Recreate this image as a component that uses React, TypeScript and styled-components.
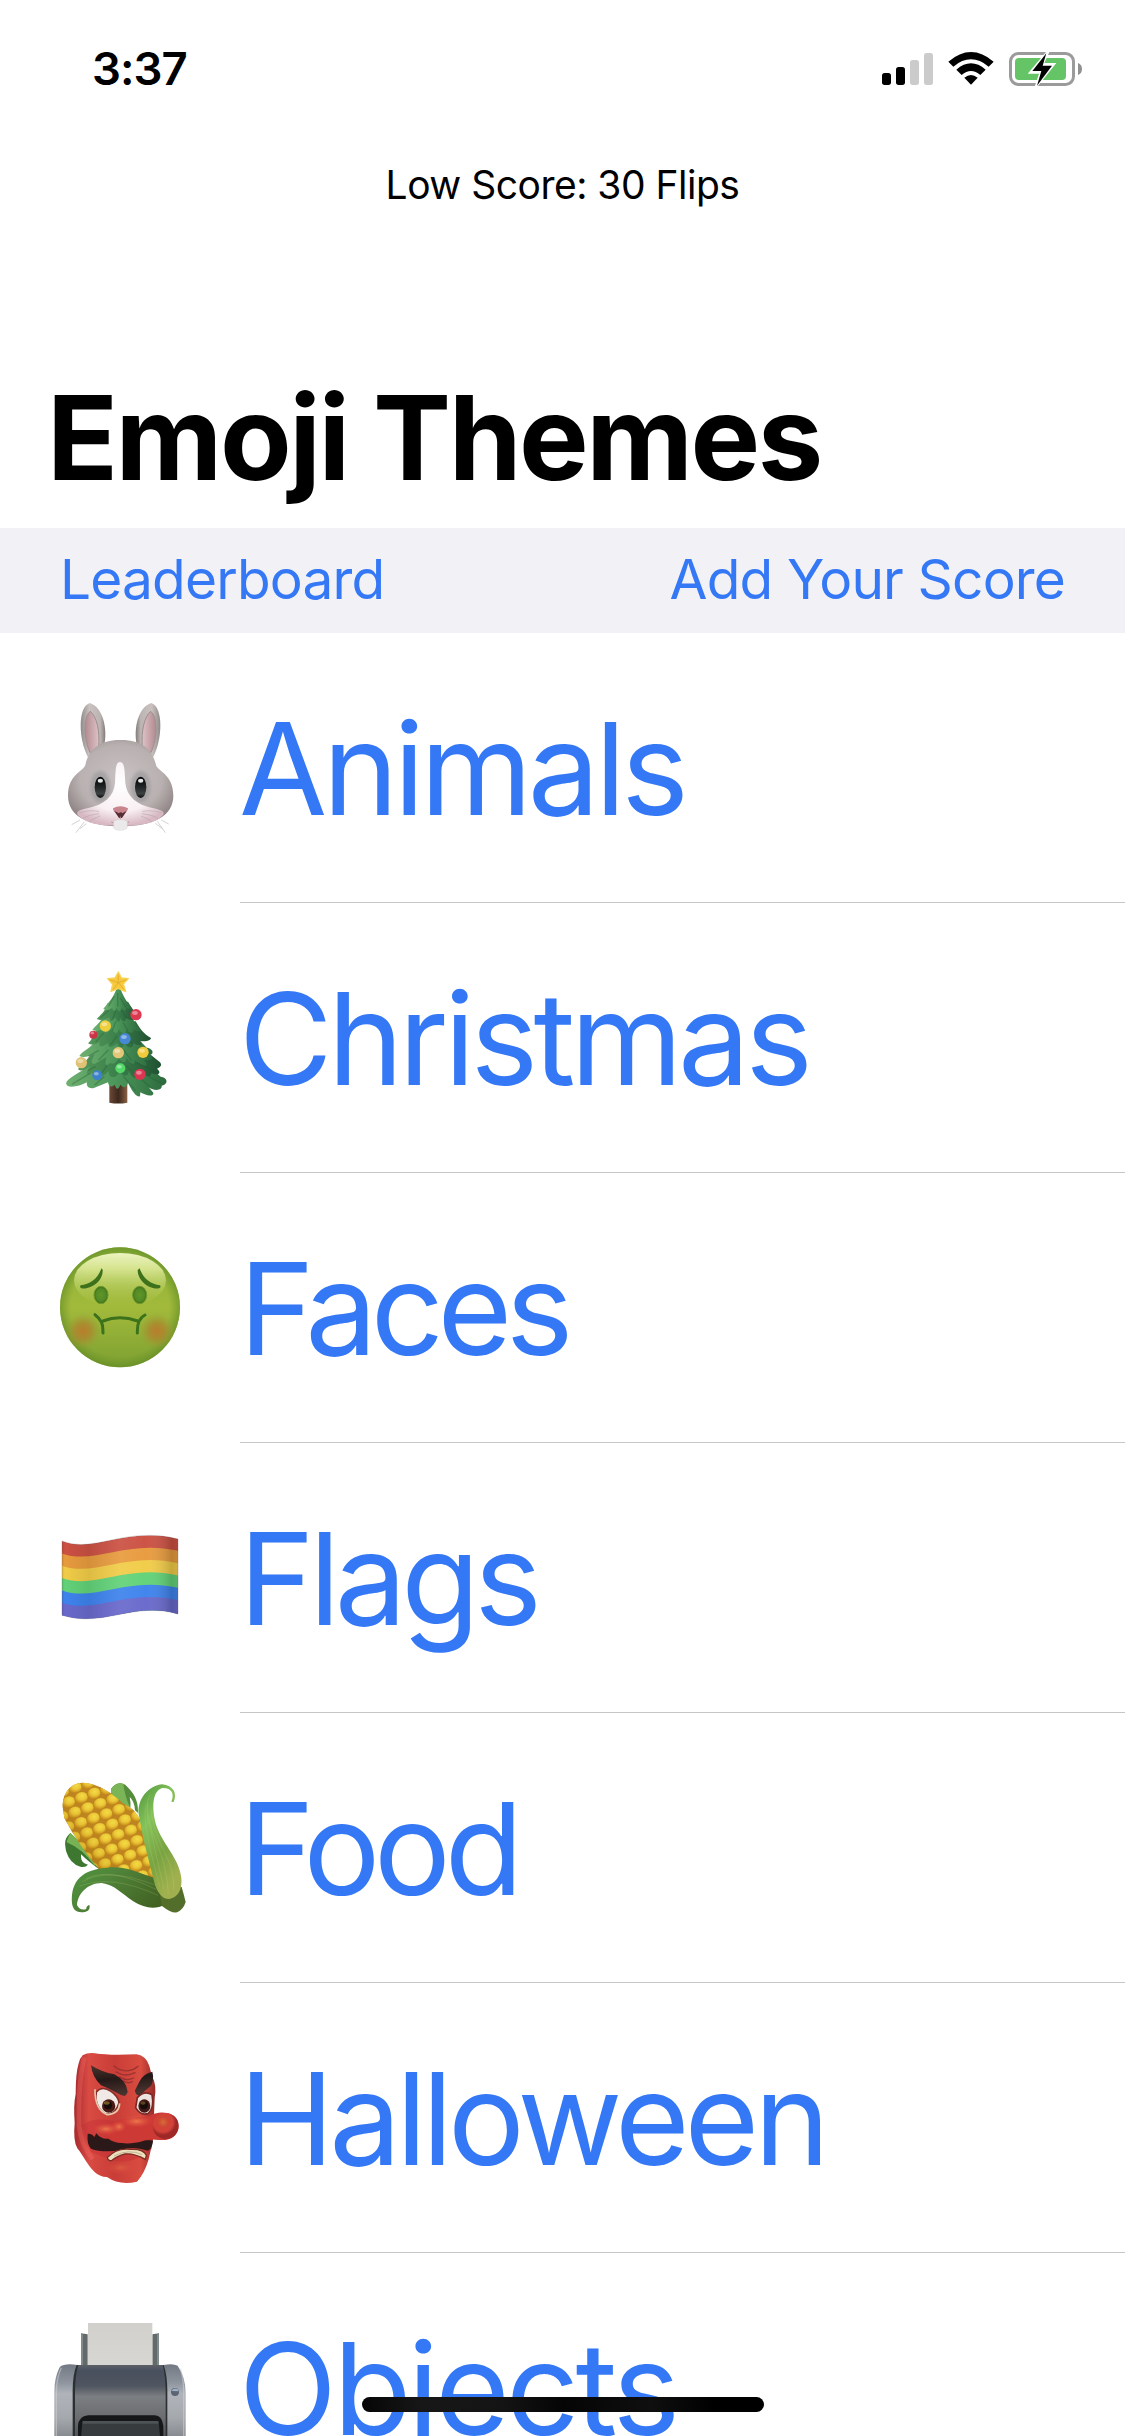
import React from "react";
import styled, { createGlobalStyle } from "styled-components";

const Global = createGlobalStyle`
  * { box-sizing: border-box; }
  body { margin: 0; background: #fff; font-family: Inter, Roboto, "Liberation Sans", sans-serif; }
`;

const Screen = styled.main`
  position: relative;
  width: 1125px;
  height: 2436px;
  overflow: hidden;
  display: flex;
  flex-direction: column;
  background: #fff;
  color: #000;
`;

const StatusBar = styled.header`
  flex: none;
  height: 132px;
  padding: 30px 15px 0 92px;
  display: flex;
  justify-content: space-between;
  align-items: flex-start;
`;

const Clock = styled.time`
  font-size: 45.5px;
  font-weight: 600;
  line-height: 78px;
  letter-spacing: -1px;
`;

const StatusIcons = styled.svg`
  display: block;
  width: 250px;
  height: 80px;
`;

const ScoreLine = styled.p`
  flex: none;
  margin: 0;
  height: 228px;
  padding-top: 29px;
  text-align: center;
  font-size: 39px;
  line-height: 48px;
  letter-spacing: -0.5px;
`;

const Title = styled.h1`
  flex: none;
  margin: 0;
  height: 168px;
  padding-left: 47px;
  font-size: 117px;
  font-weight: 700;
  line-height: 155px;
  letter-spacing: -2.45px;
  white-space: nowrap;
`;

const ActionBar = styled.nav`
  flex: none;
  height: 105px;
  padding: 0 60px 3px;
  display: flex;
  justify-content: space-between;
  align-items: center;
  background: #f2f1f6;
`;

const Action = styled.a`
  color: #3478f6;
  font-size: 55px;
  line-height: 66px;
  letter-spacing: -0.83px;
  white-space: nowrap;
`;

const ThemeList = styled.ul`
  flex: none;
  margin: 0;
  padding: 0;
  list-style: none;
`;

const ThemeRow = styled.li`
  height: 270px;
  padding-left: 40px;
  display: flex;
`;

const Emoji = styled.svg`
  flex: none;
  width: 160px;
  height: 170px;
  margin: 47px 40px 0 0;
`;

const LabelCell = styled.div`
  flex: 1;
  display: flex;
  align-items: center;
  padding-top: 2px;
  border-bottom: 1px solid #c6c6c8;
`;

const Label = styled.span<{ $track: number; $inset: number }>`
  color: #3478f6;
  font-size: 128px;
  line-height: 156px;
  letter-spacing: ${(p) => p.$track}px;
  margin-left: ${(p) => p.$inset}px;
  white-space: nowrap;
`;

const HomeIndicator = styled.div`
  position: absolute;
  left: 362px;
  top: 2397px;
  width: 402px;
  height: 15px;
  border-radius: 8px;
  background: linear-gradient(90deg, #060606, #171717 15%, #141414 35%, #050505 50%, #0f0f0f 72%, #000 88%);
`;

function Status() {
  return (
    <StatusIcons viewBox="0 0 750 240" aria-label="Signal, Wi-Fi, charging">
      <rect x="66" y="129" width="27" height="36" rx="8" />
      <rect x="108" y="111" width="27" height="54" rx="8" />
      <rect x="150" y="90" width="27" height="75" rx="8" fill="#cbcbcb" />
      <rect x="192" y="69" width="27" height="96" rx="8" fill="#cbcbcb" />
      <path d="M265 95Q333 37 401 95L386 110Q333 66 280 110Z" />
      <path d="M289 119Q333 81 377 119L361 135Q333 111 305 135Z" />
      <path d="M313 143Q333 127 353 143L333 164Z" />
      <rect x="451.500" y="70.500" width="189" height="93" rx="24" fill="none" stroke="#9b9b9b" strokeWidth="9" />
      <path d="M654 99Q666 104 666 117T654 135Z" fill="#909090" />
      <rect x="465" y="84" width="153" height="66" rx="12" fill="#65c466" />
      <path d="M560 64L503 131H537L524 170H532L589 99H553L569 64Z" fill="#fff" />
      <path d="M559 70L517 123H544L531 167L576 107H548Z" />
    </StatusIcons>
  );
}

function Rabbit() {
  return (
    <Emoji viewBox="0 0 480 510" role="img" aria-label="Rabbit">
      <defs>
        <radialGradient id="fur" cx=".5" cy=".45" r=".6">
          <stop offset="0" stopColor="#c9c2c2" /><stop offset=".65" stopColor="#b9b1b1" /><stop offset="1" stopColor="#8d8182" />
        </radialGradient>
        <linearGradient id="ear"><stop stopColor="#8f8988" /><stop offset=".35" stopColor="#c9c2c0" /><stop offset=".8" stopColor="#bcb4b2" /><stop offset="1" stopColor="#817b7a" /></linearGradient>
        <linearGradient id="pink" x2="1"><stop stopColor="#b28a90" /><stop offset="1" stopColor="#dfc3c7" /></linearGradient>
        <radialGradient id="muzzle" cx=".5" cy=".35" r=".65"><stop stopColor="#fff" /><stop offset=".65" stopColor="#f9f0f4" /><stop offset="1" stopColor="#d8b8c2" /></radialGradient>
        <linearGradient id="eye" x2="0" y2="1"><stop stopColor="#000" /><stop offset=".55" stopColor="#262a2a" /><stop offset=".8" stopColor="#3c4141" /><stop offset="1" stopColor="#080808" /></linearGradient>
        <filter id="softFur"><feGaussianBlur stdDeviation="4" /></filter>
      </defs>
      <path d="M143 230C116 178 112 82 149 69C188 80 203 145 193 193Z" fill="url(#ear)" />
      <path d="M150 218C130 174 130 110 151 94C170 111 180 151 176 203Z" fill="url(#pink)" stroke="#9b9091" strokeWidth="3" />
      <g transform="translate(483 0) scale(-1 1)">
        <path d="M143 230C116 178 112 82 149 69C188 80 203 145 193 193Z" fill="url(#ear)" />
        <path d="M150 218C130 174 130 110 151 94C170 111 180 151 176 203Z" fill="url(#pink)" stroke="#9b9091" strokeWidth="3" />
      </g>
      <path d="M242 180C303 179 338 207 348 255C354 275 400 283 400 347C400 407 342 438 242 439C142 438 84 407 84 347C84 283 130 275 136 255C146 207 181 179 242 180Z" fill="url(#fur)" />
      <ellipse cx="181" cy="320" rx="30" ry="47" fill="#88898d" opacity=".45" filter="url(#softFur)" />
      <ellipse cx="302" cy="320" rx="30" ry="47" fill="#88898d" opacity=".45" filter="url(#softFur)" />
      <path d="M240 246C226 246 227 270 225 309C222 350 191 375 145 384C105 392 103 400 128 417C154 435 195 437 241 437C288 437 331 433 357 416C378 400 379 393 337 384C291 375 260 350 256 309C254 270 254 246 240 246Z" fill="url(#muzzle)" />
      {[181, 302].map((x) => (
        <g key={x}><ellipse cx={x} cy="322" rx="17" ry="32" fill="url(#eye)" /><ellipse cx={x} cy="302" rx="8" ry="6" fill="#e5e9e9" /></g>
      ))}
      <path d="M219 385Q241 373 264 385C264 393 255 399 246 411H237C228 399 219 395 219 385Z" fill="#c9858e" />
      <path d="M223 393L237 400Q242 394 247 400L260 393L246 414H237Z" fill="#552d32" />
      <path d="M241 410L241 421Q224 432 214 426M241 421Q257 432 268 426" fill="none" stroke="#b995a0" strokeWidth="3" />
      <path d="M221 424Q241 413 262 424L261 445Q251 453 241 451Q230 453 221 445Z" fill="#ece9ea" stroke="#d5cccf" />
      <g fill="none" stroke="#a9a2a4" strokeWidth="2" opacity=".75">
        <path d="M177 394Q142 389 117 399M177 401Q145 405 129 415M180 408Q155 417 147 426M306 394Q341 389 366 399M306 401Q338 405 354 415M303 408Q328 417 336 426" />
        <path d="M120 420L95 434M133 425L108 458M139 431L120 446M364 420L386 432M352 424L376 458M346 430L367 446" />
      </g>
    </Emoji>
  );
}

const BAUBLES: [number, number, number, string][] = [
  [160, 254, 12, "#cc3347"], [288, 194, 17, "#dc3850"], [196, 228, 17, "#efcf3c"], [255, 266, 17, "#4788d5"],
  [235, 308, 17, "#e4c879"], [309, 307, 17, "#f1cb3c"], [124, 338, 17, "#dfc273"], [241, 355, 15, "#54d969"],
  [172, 376, 15, "#3d80cc"], [300, 373, 17, "#dc3552"],
];

function Tree() {
  return (
    <Emoji viewBox="0 0 480 510" role="img" aria-label="Christmas tree">
      <defs>
        <linearGradient id="trunk"><stop stopColor="#6b4936" /><stop offset=".5" stopColor="#3d281d" /><stop offset="1" stopColor="#8a6245" /></linearGradient>
        <linearGradient id="pine"><stop stopColor="#6fb070" /><stop offset=".5" stopColor="#4c965a" /><stop offset="1" stopColor="#2c6a3d" /></linearGradient>
        <linearGradient id="pineDark"><stop stopColor="#55985a" /><stop offset=".5" stopColor="#397d4a" /><stop offset="1" stopColor="#205132" /></linearGradient>
      </defs>
      <path d="M208 395H262V458Q235 463 208 458Z" fill="url(#trunk)" />
      <path d="M151 345C116 371 75 387 79 403C82 416 118 410 141 397C137 410 151 421 169 411L204 397C206 412 216 412 224 404Q232 428 241 404Q255 421 264 399C278 426 288 441 300 439L301 427C320 439 342 440 340 428L326 412C349 427 368 417 365 407C387 402 383 382 362 380L326 349Z" fill="url(#pine)" />
      <path d="M163 295C149 326 122 347 114 357C126 369 137 355 151 350C128 373 144 380 168 362C157 389 188 386 206 362C207 391 231 384 239 363C251 387 266 377 267 362C277 394 302 386 299 366C319 386 337 378 334 369C352 378 368 370 351 356Q370 348 360 337L306 293Z" fill="url(#pineDark)" />
      <path d="M167 270C151 298 127 302 118 318C130 325 148 318 165 312C154 331 150 343 165 341L200 321C192 344 199 352 210 338C222 346 229 337 237 325C248 344 259 338 260 324C273 345 287 348 283 331L312 348C323 350 321 337 311 329C331 334 346 326 330 315C346 310 335 293 320 293L295 267Z" fill="url(#pine)" />
      <path d="M178 229C158 258 158 267 144 280C158 289 171 280 180 276C172 292 186 294 204 278C204 300 221 289 231 279C239 297 252 295 252 280C268 300 283 293 279 280C300 290 313 287 299 273C325 276 336 267 332 263C311 253 297 232 287 214Z" fill="url(#pineDark)" />
      <path d="M191 191C183 220 168 225 157 239C174 247 184 240 192 235C194 256 208 246 216 235C222 254 234 252 236 238C249 257 261 251 258 237C271 253 284 250 280 238C299 249 310 244 300 236C289 224 276 210 272 184Z" fill="url(#pine)" />
      <path d="M203 159C199 181 183 193 170 207C186 214 198 207 208 202C208 217 219 216 225 202C232 219 240 220 240 204C249 220 260 215 257 203C276 216 289 209 277 198L295 199C281 184 271 166 264 155Z" fill="url(#pineDark)" />
      <path d="M233 105C222 145 203 160 190 176C202 185 211 177 217 173C217 187 227 183 230 173C237 188 242 187 244 174C254 186 261 182 258 172C270 182 280 178 272 170C259 154 248 137 240 112Z" fill="url(#pine)" />
      <g fill="none" stroke="#215c32" strokeWidth="4" opacity=".38" strokeLinecap="round">
        <path d="M222 140L207 167M233 130V168M242 145L256 170M205 182L182 203M227 184L219 206M245 182L260 205M203 212L184 232M227 215L218 239M250 219L263 240M190 250L168 275M230 259L212 283M252 255L276 279M175 302L146 318M204 301L177 329M251 300L274 331M295 300L319 319M166 350L145 361M201 347L185 370M260 348L278 368M294 340L336 359M149 371L97 402M192 380L165 404M251 380L286 421M304 388L332 413M326 379L365 401" />
      </g>
      <path d="M235 66L244 84L265 86L250 102L257 125L235 115L213 124L218 103L203 86L225 84Z" fill="#f6c83b" stroke="#f8d253" strokeWidth="4" strokeLinejoin="round" />
      <path d="M235 73V98L208 89M235 98L219 120M235 98L253 119M235 98L260 89" fill="none" stroke="#dca42b" strokeWidth="2" />
      {BAUBLES.map(([x, y, r, c]) => (
        <g key={`${x}-${y}`}><circle cx={x} cy={y} r={r} fill={c} /><ellipse cx={x - 3} cy={y - 5} rx={r * 0.5} ry={r * 0.35} fill="#fff" opacity=".4" /></g>
      ))}
    </Emoji>
  );
}

function SickFace() {
  return (
    <Emoji viewBox="0 -30 480 510" role="img" aria-label="Nauseated face">
      <defs>
        <linearGradient id="green" x2="0" y2="1"><stop stopColor="#8ab038" /><stop offset=".5" stopColor="#a2ba3b" /><stop offset="1" stopColor="#7da031" /></linearGradient>
        <radialGradient id="rim"><stop offset=".82" stopColor="#658e25" stopOpacity="0" /><stop offset="1" stopColor="#5e8924" stopOpacity=".6" /></radialGradient>
        <linearGradient id="shine" x2="0" y2="1"><stop stopColor="#edf4c1" /><stop offset=".3" stopColor="#dce896" stopOpacity=".9" /><stop offset="1" stopColor="#acc444" stopOpacity="0" /></linearGradient>
        <radialGradient id="blush"><stop stopColor="#b97d2b" /><stop offset=".45" stopColor="#ae842d" stopOpacity=".75" /><stop offset="1" stopColor="#9d9a34" stopOpacity="0" /></radialGradient>
        <radialGradient id="greenEye"><stop stopColor="#619529" /><stop offset=".7" stopColor="#528a25" /><stop offset="1" stopColor="#3b6d17" /></radialGradient>
      </defs>
      <circle cx="240" cy="232" r="180" fill="url(#green)" />
      <circle cx="240" cy="232" r="180" fill="url(#rim)" />
      <ellipse cx="240" cy="151" rx="138" ry="82" fill="url(#shine)" />
      <circle cx="129" cy="303" r="54" fill="url(#blush)" /><circle cx="351" cy="303" r="54" fill="url(#blush)" />
      <ellipse cx="183" cy="195" rx="21" ry="26" fill="url(#greenEye)" stroke="#70972b" strokeWidth="3" />
      <ellipse cx="299" cy="195" rx="21" ry="26" fill="url(#greenEye)" stroke="#70972b" strokeWidth="3" />
      <path d="M184 115C174 146 150 163 122 166C116 175 127 178 142 174C169 168 190 145 188 119ZM299 115C309 146 333 163 360 166C366 175 354 178 339 174C312 168 292 142 293 120Z" fill="#3e711b" />
      <path d="M165 254Q175 261 184 276C190 287 188 297 189 309M189 273Q239 254 293 273M315 255Q304 260 297 274C291 287 292 297 292 309" fill="none" stroke="#3b721b" strokeWidth="9" strokeLinecap="round" />
    </Emoji>
  );
}

const STRIPES = ["#cb5143", "#e89b3e", "#f1cc48", "#62d278", "#3e83ed", "#6969cc"];

function Flag() {
  return (
    <Emoji viewBox="0 -60 480 510" role="img" aria-label="Rainbow flag">
      <defs>
        <clipPath id="flagClip"><path d="M66 93C164 132 257 47 414 87V312C279 273 193 354 66 316Z" /></clipPath>
        <linearGradient id="folds"><stop stopColor="#222" stopOpacity=".2" /><stop offset=".04" stopOpacity="0" /><stop offset=".24" stopColor="#000" stopOpacity=".08" /><stop offset=".5" stopColor="#fff" stopOpacity=".07" /><stop offset=".72" stopColor="#fff" stopOpacity=".02" /><stop offset=".93" stopColor="#000" stopOpacity=".18" /><stop offset="1" stopColor="#000" stopOpacity=".12" /></linearGradient>
      </defs>
      <g clipPath="url(#flagClip)">
        {STRIPES.map((color, i) => (
          <path key={color} transform={`translate(0 ${i * 37})`} d="M60 91C164 132 257 47 420 87V200H60Z" fill={color} />
        ))}
        <rect x="60" y="60" width="360" height="280" fill="url(#folds)" />
      </g>
      <path d="M66 93C164 132 257 47 414 87V312C279 273 193 354 66 316Z" fill="none" stroke="#72525c" strokeOpacity=".4" strokeWidth="2" />
    </Emoji>
  );
}

const KERNELS = Array.from({ length: 13 }, (_, row) =>
  Array.from({ length: 9 }, (_, col) => ({
    x: 86 + (col - 2) * 38 + (row - 3) * 18,
    y: 126 - (col - 2) * 13 + (row - 3) * 31,
    key: `${row}-${col}`,
  })),
).flat();

function Corn() {
  return (
    <Emoji viewBox="0 0 480 510" role="img" aria-label="Corn">
      <defs>
        <clipPath id="cob"><path d="M68 140C68 100 91 69 128 68C180 70 223 106 252 132Q287 148 299 178L344 358Q248 342 180 331Q115 254 73 174Z" /></clipPath>
        <radialGradient id="kernel" cx=".6" cy=".38" r=".6"><stop stopColor="#f3dc46" /><stop offset=".55" stopColor="#ebc636" /><stop offset="1" stopColor="#c98f1c" /></radialGradient>
        <linearGradient id="cobShade" x1=".1" y1=".75" x2=".6" y2=".35"><stop stopColor="#774500" stopOpacity=".38" /><stop offset=".6" stopColor="#a66b00" stopOpacity="0" /></linearGradient>
        <linearGradient id="husk" x2=".5" y2="1"><stop stopColor="#50963d" /><stop offset=".35" stopColor="#84c25a" /><stop offset=".7" stopColor="#79a342" /><stop offset="1" stopColor="#a0b04e" /></linearGradient>
        <linearGradient id="lowerHusk" x2="1" y2=".5"><stop stopColor="#4e943e" /><stop offset=".4" stopColor="#50843a" /><stop offset="1" stopColor="#426223" /></linearGradient>
      </defs>
      <path d="M213 86C227 68 242 66 256 74C273 92 296 111 294 159L285 151Q284 124 269 111Q273 129 271 145Q239 129 213 108Z" fill="#548d3b" />
      <path d="M213 86Q233 66 250 71Q254 107 271 145Q237 129 213 108Z" fill="#7ab657" />
      <path d="M91 219C69 240 76 254 78 273Q90 312 121 320Q136 324 144 314C127 310 122 301 123 283Q143 303 176 327L181 305Z" fill="#3e7830" />
      <path d="M91 219Q81 239 80 247Q129 267 164 318L181 305Z" fill="#77b354" />
      <path d="M68 140C68 100 91 69 128 68C180 70 223 106 252 132Q287 148 299 178L344 358Q248 342 180 331Q115 254 73 174Z" fill="#bd8420" />
      <g clipPath="url(#cob)">
        {KERNELS.map(({ x, y, key }) => <ellipse key={key} cx={x} cy={y} rx="20.500" ry="17.500" transform={`rotate(-19 ${x} ${y})`} fill="url(#kernel)" stroke="#bd8420" strokeWidth="1.500" />)}
        <rect x="50" y="60" width="310" height="310" fill="url(#cobShade)" />
      </g>
      <path d="M341 353C288 337 258 317 202 323C129 328 91 360 96 430C99 455 117 460 137 455Q153 451 148 434Q137 440 139 447Q120 453 111 435C113 402 142 369 185 369C243 376 267 438 337 443Q382 443 393 408Z" fill="url(#lowerHusk)" />
      <path d="M355 373L425 381Q431 402 437 426Q430 449 411 457Q397 462 365 437Z" fill="#536e2b" />
      <path d="M401 126C412 100 401 77 366 73C314 79 287 133 298 172C311 252 333 324 345 375C357 407 373 419 388 417C415 410 427 389 424 353C417 297 374 259 353 207C335 161 332 90 369 84C396 84 404 103 394 125Z" fill="url(#husk)" />
      <g fill="none" stroke="#d1d886" strokeWidth="1.500" opacity=".38">
        <path d="M330 104Q309 144 333 215L372 389M323 128Q319 180 351 252Q382 325 385 402M332 145Q339 207 374 278Q402 327 402 390M318 134Q303 176 359 379M126 366Q202 320 342 374M137 357Q205 318 348 388M118 379Q213 341 354 406" />
      </g>
    </Emoji>
  );
}

function Mask() {
  return (
    <Emoji viewBox="0 0 480 510" role="img" aria-label="Red mask">
      <defs>
        <linearGradient id="maskRed"><stop stopColor="#a52a2d" /><stop offset=".18" stopColor="#d94b43" /><stop offset=".5" stopColor="#c83d37" /><stop offset=".82" stopColor="#d94c40" /><stop offset="1" stopColor="#942a28" /></linearGradient>
        <radialGradient id="noseTip" cx=".4" cy=".35"><stop stopColor="#d66c36" /><stop offset=".4" stopColor="#cf4535" /><stop offset=".75" stopColor="#d44139" /><stop offset="1" stopColor="#9d2826" /></radialGradient>
        <radialGradient id="glow"><stop stopColor="#f58a50" stopOpacity=".8" /><stop offset="1" stopColor="#e34f43" stopOpacity="0" /></radialGradient>
        <linearGradient id="brow" x2=".2" y2="1"><stop stopColor="#4d342d" /><stop offset=".5" stopColor="#241918" /><stop offset="1" stopColor="#4a332e" /></linearGradient>
      </defs>
      <path d="M128 76Q145 66 165 70Q207 77 290 73Q319 78 328 108L336 139Q351 165 344 204L339 330L326 388Q313 432 291 455Q238 467 201 441Q178 440 163 425C141 404 132 380 112 355Q99 333 104 279Q100 224 107 192Q107 129 116 100Q120 84 128 76Z" fill="url(#maskRed)" />
      <path d="M126 286Q169 253 239 279L328 294L336 356Q285 403 223 392L153 366Z" fill="#c52e35" opacity=".45" />
      <path d="M133 82Q114 157 117 287Q122 344 158 387" stroke="#ff706c" strokeWidth="14" opacity=".3" fill="none" />
      <g fill="none" stroke="#872e2d" strokeWidth="4" strokeLinecap="round" opacity=".75"><path d="M222 108C244 127 275 127 294 109M229 126Q256 143 285 128M238 140Q258 155 281 144M247 151Q262 163 277 155" /></g>
      <path d="M169 186Q186 166 213 184Q235 199 237 218Q229 252 197 253Q162 229 169 186Z" fill="#f0e9e5" stroke="#822d28" strokeWidth="5" />
      <path d="M292 203Q313 180 336 194Q344 236 324 251Q301 258 287 233Z" fill="#ede3df" stroke="#7f2724" strokeWidth="5" />
      <path d="M165 178Q164 239 201 254Q237 252 239 220" fill="none" stroke="#e7c6a9" strokeWidth="5" />
      <circle cx="206" cy="228" r="20" fill="#4b1a17" /><ellipse cx="313" cy="228" rx="18" ry="20" fill="#431917" />
      <circle cx="204" cy="226" r="12" fill="#170e0c" /><circle cx="312" cy="226" r="12" fill="#160d0b" />
      <ellipse cx="200" cy="219" rx="9" ry="5" fill="#99782c" opacity=".7" /><ellipse cx="309" cy="219" rx="8" ry="5" fill="#7a5826" opacity=".7" />
      <path d="M153 106Q186 127 223 133Q260 153 263 185Q258 203 243 195Q207 176 183 166Q157 142 153 106ZM337 125Q308 132 298 155L285 181Q285 196 298 197L333 167Q343 148 337 125Z" fill="url(#brow)" />
      <path d="M143 311Q156 310 163 321L169 310Q183 329 205 326C240 353 284 326 339 332Q337 356 324 362Q275 346 243 361Q185 369 153 356Q140 343 143 311Z" fill="#2a1918" />
      <path d="M198 309C206 257 282 266 329 258C353 241 404 243 414 276C421 306 402 327 377 330C339 331 324 324 307 334C258 348 211 339 198 309Z" fill="#cd3935" />
      <circle cx="377" cy="288" r="39" fill="url(#noseTip)" />
      <ellipse cx="198" cy="297" rx="41" ry="18" fill="url(#glow)" /><ellipse cx="237" cy="290" rx="22" ry="18" fill="url(#glow)" /><ellipse cx="290" cy="274" rx="48" ry="19" fill="url(#glow)" />
      <path d="M202 383Q229 353 271 358Q311 356 319 376L316 388Q281 369 255 372Q231 378 216 391Q204 394 202 383Z" fill="#eee1bd" stroke="#7b2e26" strokeWidth="4" />
      <path d="M222 378Q266 355 307 374" stroke="#aa9d7f" strokeWidth="2" fill="none" />
      <ellipse cx="241" cy="413" rx="45" ry="20" fill="url(#glow)" opacity=".45" />
    </Emoji>
  );
}

function Printer() {
  return (
    <Emoji viewBox="0 0 480 510" role="img" aria-label="Printer">
      <defs>
        <linearGradient id="body" gradientUnits="userSpaceOnUse" x1="0" x2="0" y1="195" y2="420"><stop stopColor="#5d6067" /><stop offset=".08" stopColor="#484f5d" /><stop offset=".28" stopColor="#505660" /><stop offset=".42" stopColor="#7b7e82" /><stop offset=".7" stopColor="#6b6d70" /><stop offset="1" stopColor="#4a4d50" /></linearGradient>
        <linearGradient id="side" x2="0" y2="1"><stop stopColor="#737982" /><stop offset=".22" stopColor="#8d949e" /><stop offset=".36" stopColor="#b0b4ba" /><stop offset=".65" stopColor="#a5a8ad" /><stop offset="1" stopColor="#777a7e" /></linearGradient>
        <linearGradient id="paper" x2="0" y2="1"><stop stopColor="#d1d0cc" /><stop offset="1" stopColor="#d8d7d3" /></linearGradient>
      </defs>
      <path d="M123 100L143 103V203H123ZM337 103L357 100V203H337Z" fill="#626a6b" />
      <path d="M126 103V195M354 103V195" stroke="#929b9c" strokeWidth="4" />
      <rect x="144" y="69" width="193" height="137" fill="url(#paper)" />
      <path d="M72 195Q87 190 112 195H371Q398 189 413 197Q438 234 437 282V440H43V282Q42 235 59 202Q63 196 72 195Z" fill="url(#side)" />
      <path d="M110 195H371Q383 227 382 281V440H98V281Q97 225 110 195Z" fill="#2d3032" />
      <path d="M115 195H368Q377 229 377 280V440H105V280Q105 227 115 195Z" fill="url(#body)" />
      <path d="M64 203Q48 238 49 285V420M421 205Q432 241 431 285V420" fill="none" stroke="#d1d2d6" strokeWidth="4" opacity=".55" />
      <path d="M114 378Q116 348 144 346H344Q367 347 370 378V440H114Z" fill="#151719" />
      <path d="M127 365H356L363 440H121Z" fill="#373b3e" />
      <path d="M128 367H355" stroke="#4e5356" strokeWidth="8" />
      <circle cx="405" cy="276" r="12" fill="#5b6470" /><path d="M394 273Q400 261 414 268L416 274Z" fill="#9dafc8" />
    </Emoji>
  );
}

const THEMES = [
  { name: "Animals", Icon: Rabbit, track: -4.6, inset: -1 },
  { name: "Christmas", Icon: Tree, track: -4.7, inset: -1 },
  { name: "Faces", Icon: SickFace, track: -6.3, inset: -1 },
  { name: "Flags", Icon: Flag, track: -5.4, inset: -1 },
  { name: "Food", Icon: Corn, track: -6.1, inset: -1 },
  { name: "Halloween", Icon: Mask, track: -5, inset: -1 },
  { name: "Objects", Icon: Printer, track: -3.7, inset: -1 },
];

export default function App() {
  return (
    <Screen>
      <Global />
      <StatusBar>
        <Clock>3:37</Clock>
        <Status />
      </StatusBar>
      <ScoreLine>Low Score: 30 Flips</ScoreLine>
      <Title>Emoji Themes</Title>
      <ActionBar>
        <Action>Leaderboard</Action>
        <Action>Add Your Score</Action>
      </ActionBar>
      <ThemeList>
        {THEMES.map(({ name, Icon, track, inset }) => (
          <ThemeRow key={name}>
            <Icon />
            <LabelCell><Label $track={track} $inset={inset}>{name}</Label></LabelCell>
          </ThemeRow>
        ))}
      </ThemeList>
      <HomeIndicator />
    </Screen>
  );
}
